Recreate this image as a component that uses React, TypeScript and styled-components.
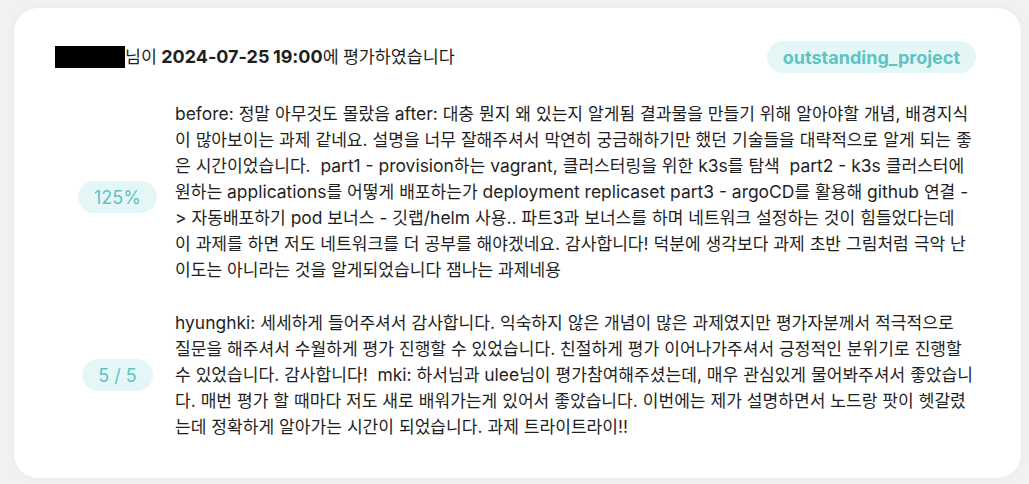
import React from "react";
import styled, { createGlobalStyle } from "styled-components";

const Global = createGlobalStyle`
  html, body {
    margin: 0;
    padding: 0;
    background: #f1f1f1;
  }
  body {
    font-family: Inter, "Noto Sans CJK KR", sans-serif;
    color: #1f1f1f;
  }
`;

const Page = styled.div`
  padding: 8px 8px 7px 14px;
`;

const Card = styled.section`
  background: #ffffff;
  border-radius: 24px;
  box-shadow: 0 0 10px rgba(0, 0, 0, 0.035);
  padding: 33px 45px 38px 41px;
  display: flex;
  flex-direction: column;
  gap: 27px;
`;

const Header = styled.header`
  display: flex;
  align-items: center;
  justify-content: space-between;
  height: 32px;
  margin-bottom: 1px;
`;

const Title = styled.div`
  font-size: 18px;
  line-height: 26px;
  color: #1f1f1f;
  word-spacing: -0.8px;
`;

const Redacted = styled.span`
  display: inline-block;
  width: 70px;
  height: 22px;
  background: #000;
  vertical-align: -5px;
`;

const Strong = styled.strong`
  font-weight: 700;
`;

const Pill = styled.span<{ $bold?: boolean }>`
  display: inline-flex;
  align-items: center;
  justify-content: center;
  height: 32px;
  padding: 0 16px;
  border-radius: 999px;
  background: #e5f6f6;
  color: #5ec3c3;
  font-size: 18px;
  font-weight: ${(p) => (p.$bold ? 700 : 400)};
  white-space: nowrap;
`;

const Row = styled.div`
  display: grid;
  grid-template-columns: 120px 798.8px;
  align-items: center;
`;

const ScoreCell = styled.div<{ $shift: number }>`
  display: flex;
  justify-content: center;
  padding-left: 5px;
  margin-top: ${(p) => (p.$shift > 0 ? p.$shift * 2 : 0)}px;
  margin-bottom: ${(p) => (p.$shift < 0 ? -p.$shift * 2 : 0)}px;
`;

const Comment = styled.p`
  margin: 0;
  font-size: 17.46px;
  line-height: 26px;
  color: #1f1f1f;
  white-space: pre-wrap;
`;

const Ko = styled.span<{ $size: number }>`
  font-size: ${(p) => p.$size}px;
  line-height: 1;
`;

function Mixed({ text, size }: { text: string; size: number }) {
  const parts = text.split(/([\u3131-\u318E\uAC00-\uD7A3]+)/);
  return (
    <>
      {parts.map((p, i) =>
        i % 2 === 1 ? (
          <Ko key={i} $size={size}>
            {p}
          </Ko>
        ) : (
          <React.Fragment key={i}>{p}</React.Fragment>
        )
      )}
    </>
  );
}

const rows = [
  {
    score: "125%",
    shift: 5,
    text:
      "before: 정말 아무것도 몰랐음 after: 대충 뭔지 왜 있는지 알게됨 결과물을 만들기 위해 알아야할 개념, 배경지식이 많아보이는 과제 같네요. 설명을 너무 잘해주셔서 막연히 궁금해하기만 했던 기술들을 대략적으로 알게 되는 좋은 시간이었습니다.  part1 - provision하는 vagrant, 클러스터링을 위한 k3s를 탐색  part2 - k3s 클러스터에 원하는 applications를 어떻게 배포하는가 deployment replicaset part3 - argoCD를 활용해 github 연결 -> 자동배포하기 pod 보너스 - 깃랩/helm 사용.. 파트3과 보너스를 하며 네트워크 설정하는 것이 힘들었다는데 이 과제를 하면 저도 네트워크를 더 공부를 해야겠네요. 감사합니다! 덕분에 생각보다 과제 초반 그림처럼 극악 난이도는 아니라는 것을 알게되었습니다 잼나는 과제네용",
  },
  {
    score: "5 / 5",
    shift: 0,
    text:
      "hyunghki: 세세하게 들어주셔서 감사합니다. 익숙하지 않은 개념이 많은 과제였지만 평가자분께서 적극적으로 질문을 해주셔서 수월하게 평가 진행할 수 있었습니다. 친절하게 평가 이어나가주셔서 긍정적인 분위기로 진행할 수 있었습니다. 감사합니다!  mki: 하서님과 ulee님이 평가참여해주셨는데, 매우 관심있게 물어봐주셔서 좋았습니다. 매번 평가 할 때마다 저도 새로 배워가는게 있어서 좋았습니다. 이번에는 제가 설명하면서 노드랑 팟이 헷갈렸는데 정확하게 알아가는 시간이 되었습니다. 과제 트라이트라이!!",
  },
];

export default function App() {
  return (
    <>
      <Global />
      <Page>
        <Card>
          <Header>
            <Title>
              <Redacted />
              <Mixed text="님이 " size={17.35} />
              <Strong>2024-07-25 19:00</Strong>
              <Mixed text="에 평가하였습니다" size={17.35} />
            </Title>
            <Pill $bold>outstanding_project</Pill>
          </Header>
          {rows.map((r, i) => (
            <Row key={i}>
              <ScoreCell $shift={r.shift}>
                <Pill>{r.score}</Pill>
              </ScoreCell>
              <Comment>
                <Mixed text={r.text} size={17.085} />
              </Comment>
            </Row>
          ))}
        </Card>
      </Page>
    </>
  );
}
